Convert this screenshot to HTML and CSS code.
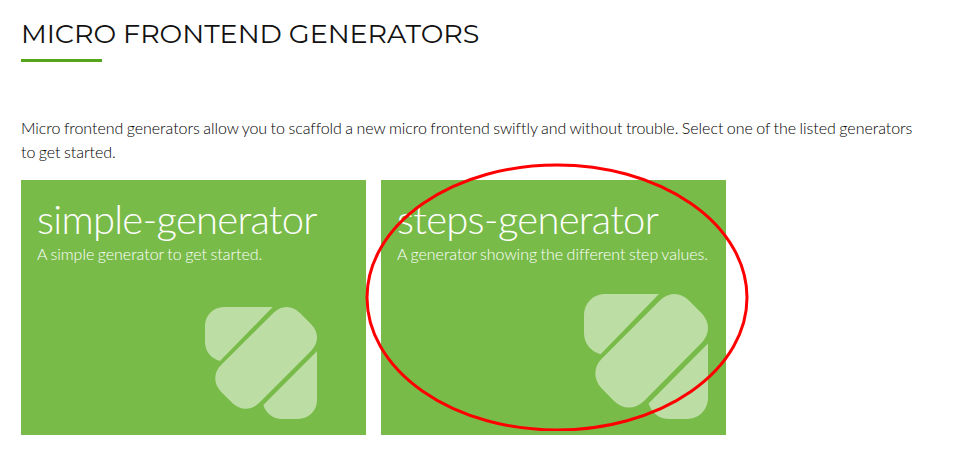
FILE: index.html
```html
<!DOCTYPE html>
<html lang="en">
<head>
<meta charset="utf-8">
<title>Micro Frontend Generators</title>
<link rel="stylesheet" href="styles.css">
</head>
<body>
<svg width="0" height="0" class="defs">
  <symbol id="logo" viewBox="0 0 336 336" preserveAspectRatio="none">
    <path d="M57 0H203L45 162C15 153 0 130 0 104V57C0 25 25 0 57 0Z"/>
    <path d="M205 18C229-6 261-6 285 18L318 51C342 75 342 108 318 132L162 288C138 311 106 311 82 288L48 254C25 230 25 197 48 174Z"/>
    <path d="M336 133V279C336 311 311 336 279 336H232C203 336 183 319 175 294Z"/>
  </symbol>
</svg>
<main class="page">
  <h1 class="title">Micro Frontend Generators</h1>
  <p class="intro">Micro frontend generators allow you to scaffold a new micro frontend swiftly and without trouble. Select one of the listed generators to get started.</p>
  <div class="cards">
    <section class="card">
      <div class="card-body">
        <h2 class="card-title">simple-generator</h2>
        <p class="card-text">A simple generator to get started.</p>
        <svg class="card-logo logo-simple"><use href="#logo"/></svg>
      </div>
    </section>
    <section class="card">
      <div class="card-body">
        <h2 class="card-title">steps-generator</h2>
        <p class="card-text">A generator showing the different step values.</p>
        <svg class="card-logo logo-steps"><use href="#logo"/></svg>
      </div>
    </section>
  </div>
</main>
<svg class="highlight" viewBox="0 0 384 268"><ellipse cx="192" cy="134.5" rx="190" ry="132.5"/></svg>
</body>
</html>
```
FILE: styles.css
```css
* { box-sizing: border-box; }
body {
  margin: 0;
  background: #fff;
  color: #000;
  font: 300 16px/24px Lato, sans-serif;
  letter-spacing: -0.045px;
  word-spacing: -0.8px;
}
.defs { position: absolute; }
.page { padding: 16px 21px 0; }
.title {
  margin: 0;
  color: #111;
  font: 400 27px/36px Montserrat, Lato, sans-serif;
  letter-spacing: -0.04px;
  word-spacing: 0;
  text-transform: uppercase;
  white-space: nowrap;
}
.title::after {
  content: "";
  display: block;
  width: 81px;
  height: 3px;
  margin-top: 7px;
  background: #55a51c;
}
.intro { margin: 54px 0 16px; width: 900px; }
.cards { display: flex; gap: 15px; }
.card {
  width: 345px;
  height: 255px;
  padding: 16px;
  background: #79bb49;
  color: #fff;
  display: flex;
}
.card-body {
  display: flex;
  flex-direction: column;
  align-items: flex-start;
  white-space: nowrap;
}
.card-title {
  margin: 0 0 -1px;
  font-weight: 300;
  font-size: 40px;
  line-height: 47px;
  letter-spacing: -0.74px;
}
.card-text { margin: 0; letter-spacing: -0.03px; }
.card-logo {
  margin-top: auto;
  align-self: flex-end;
  fill: rgba(255, 255, 255, .5);
}
.logo-simple { width: 112px; height: 112px; }
.logo-steps { width: 124px; height: 125px; }
.highlight {
  position: absolute;
  left: 365px;
  top: 163px;
  width: 384px;
  height: 268px;
  fill: none;
  stroke: #f00;
  stroke-width: 3;
}
```
